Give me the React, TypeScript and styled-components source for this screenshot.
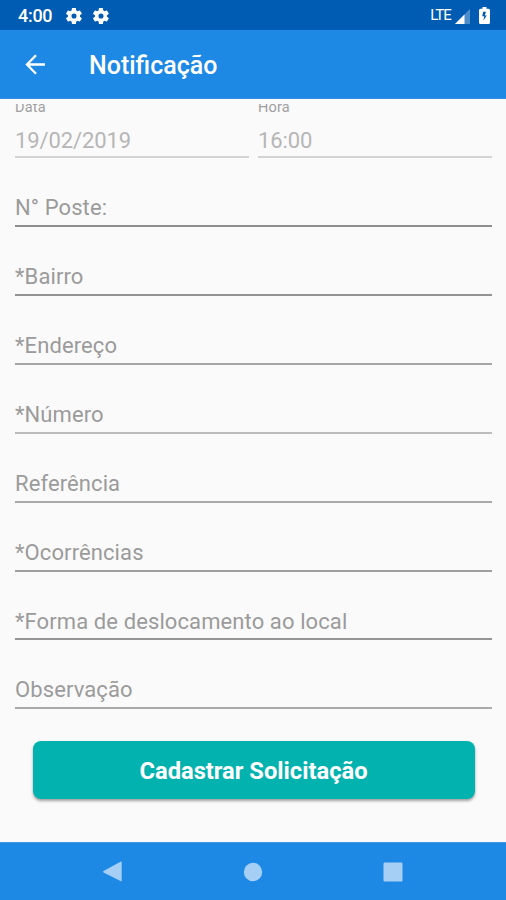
import React from 'react';
import styled, { createGlobalStyle } from 'styled-components';

const GlobalStyle = createGlobalStyle`
  * { box-sizing: border-box; }
  body { margin: 0; background: #fafafa; font-family: Roboto, "Liberation Sans", sans-serif; }
`;

const Screen = styled.div`
  width: 506px;
  height: 900px;
  display: flex;
  flex-direction: column;
  background: #fafafa;
  overflow: hidden;
`;

const StatusBar = styled.div`
  height: 30px;
  flex: none;
  display: flex;
  align-items: center;
  padding: 2px 16px 0 18px;
  background: #005cb2;
  color: #fff;
  svg { display: block; flex: none; }
`;

const Clock = styled.span`
  width: 48px;
  font-size: 18px;
  line-height: 22px;
  font-weight: 500;
  letter-spacing: -0.3px;
`;

const Gears = styled.div`
  display: flex;
  gap: 11px;
`;

const Indicators = styled.div`
  margin-left: auto;
  display: flex;
  align-items: center;
`;

const Network = styled.span`
  font-size: 15px;
  line-height: 20px;
  letter-spacing: -0.9px;
  font-weight: 400;
  margin: -2px 4px 0 0;
`;

const Battery = styled.svg`
  margin: -1px 0 0 9px;
`;

const Header = styled.header`
  height: 69px;
  flex: none;
  display: flex;
  align-items: center;
  padding-left: 22px;
  background: #1e88e5;
  border-bottom: 1px solid #3390e2;
`;

const BackButton = styled.button`
  width: 67px;
  padding: 0;
  border: 0;
  background: none;
  svg { display: block; }
`;

const Title = styled.h1`
  margin: 3px 0 0;
  color: #fff;
  font-size: 25px;
  line-height: 32px;
  font-weight: 500;
`;

const Form = styled.main`
  flex: 1;
  min-height: 0;
  margin-top: 5px;
  padding: 0 14px 0 15px;
  overflow: hidden;
`;

const DateRow = styled.div`
  height: 54.25px;
  display: grid;
  grid-template-columns: 234px 234px;
  gap: 9px;
`;

const DateField = styled.div`
  height: 54px;
  border-bottom: 2px solid #d3d3d3;
`;

const SmallLabel = styled.div`
  height: 14px;
  margin-top: -5px;
  color: #a0a0a0;
  font-size: 14.5px;
  line-height: 18px;
  letter-spacing: 0.2px;
`;

const DateValue = styled.div`
  margin-top: 14px;
  color: #b6b6b6;
  font-size: 22px;
  line-height: 28px;
  letter-spacing: -0.1px;
`;

const Field = styled.div<{ $line: string }>`
  height: 68.9px;
  padding-top: 36px;
  border-bottom: 2px solid ${(p) => p.$line};
  color: #9b9b9b;
  font-size: 22px;
  line-height: 28px;
  letter-spacing: 0.1px;
`;

const SubmitButton = styled.button`
  display: block;
  width: 442px;
  height: 58px;
  margin: 31.6px 0 0 17.5px;
  padding: 2px 0 0;
  border: 0;
  border-radius: 8px;
  background: #02b2af;
  box-shadow: 0 2px 3px rgba(0, 0, 0, 0.36);
  color: #fff;
  font-family: inherit;
  font-size: 23.7px;
  font-weight: 700;
`;

const NavBar = styled.nav`
  height: 58px;
  flex: none;
  display: flex;
  justify-content: space-between;
  align-items: center;
  padding: 0 103px 0 102px;
  background: #1e88e5;
  border-top: 1px solid #4298e5;
`;

const FIELDS = [
  { label: 'N° Poste:', line: '#8e8e8e' },
  { label: '*Bairro', line: '#929292' },
  { label: '*Endereço', line: '#a5a5a5' },
  { label: '*Número', line: '#bcbcbc' },
  { label: 'Referência', line: '#a9a9a9' },
  { label: '*Ocorrências', line: '#9f9f9f' },
  { label: '*Forma de deslocamento ao local', line: '#949494' },
  { label: 'Observação', line: '#aaaaaa' },
];

const Gear = () => (
  <svg width="16" height="16" viewBox="2 2 20 20">
    <path
      fill="#fff"
      fillRule="evenodd"
      d="M19.4 13a7.7 7.7 0 0 0 0-2l2.1-1.6a.5.5 0 0 0 .1-.7l-2-3.4a.5.5 0 0 0-.6-.2l-2.5 1a7.3 7.3 0 0 0-1.7-1l-.4-2.7a.5.5 0 0 0-.5-.4h-4a.5.5 0 0 0-.5.4L9 5.1a7.3 7.3 0 0 0-1.7 1l-2.5-1a.5.5 0 0 0-.6.2l-2 3.4a.5.5 0 0 0 .1.7L4.500 11a7.700 7.700 0 0 0 0 2l-2.200 1.600a.5.5 0 0 0-.1.700l2 3.400c.1.200.4.300.6.200l2.500-1a7.300 7.300 0 0 0 1.700 1l.4 2.700c0 .200.200.400.500.400h4c.300 0 .5-.2.500-.4l.4-2.700a7.300 7.300 0 0 0 1.700-1l2.500 1c.2.100.5 0 .6-.2l2-3.400a.5.5 0 0 0-.1-.7zM12 15.200a3.200 3.200 0 1 1 0-6.400 3.200 3.200 0 0 1 0 6.400z"
    />
  </svg>
);

export default function App() {
  return (
    <Screen>
      <GlobalStyle />
      <StatusBar>
        <Clock>4:00</Clock>
        <Gears>
          <Gear />
          <Gear />
        </Gears>
        <Indicators>
          <Network>LTE</Network>
          <svg width="15" height="15" viewBox="0 0 15 15">
            <path d="M15 0v15H0z" fill="#4c8dca" />
            <path d="M9.500 5.500V15H0z" fill="#fff" />
          </svg>
          <Battery width="11" height="17" viewBox="0 0 11 17">
            <path d="M3.500 0h4v1.800h2A1.500 1.500 0 0 1 11 3.300v12.200a1.500 1.500 0 0 1-1.500 1.500h-8A1.500 1.500 0 0 1 0 15.500V3.300a1.500 1.500 0 0 1 1.500-1.500h2z" fill="#fff" />
            <path d="M6.900 4.800H4.200L3.200 9.300h2.100L4.400 13.400 7.800 8.400H5.900z" fill="#005cb2" />
          </Battery>
        </Indicators>
      </StatusBar>
      <Header>
        <BackButton aria-label="Voltar">
          <svg width="26" height="24" viewBox="0 0 26 24" fill="none" stroke="#fff" strokeWidth="2.3">
            <path d="M23 12.500H5M14 3.300l-9 9.200 9 9.200" />
          </svg>
        </BackButton>
        <Title>Notificação</Title>
      </Header>
      <Form>
        <DateRow>
          <DateField>
            <SmallLabel>Data</SmallLabel>
            <DateValue>19/02/2019</DateValue>
          </DateField>
          <DateField>
            <SmallLabel>Hora</SmallLabel>
            <DateValue>16:00</DateValue>
          </DateField>
        </DateRow>
        {FIELDS.map((field) => (
          <Field key={field.label} $line={field.line}>
            {field.label}
          </Field>
        ))}
        <SubmitButton>Cadastrar Solicitação</SubmitButton>
      </Form>
      <NavBar>
        <svg width="21" height="22" viewBox="0 0 21 22">
          <path d="M1.500 10 18.500.700q1.200-.5 1.200.700v18q0 1.200-1.200.7L1.500 11.500q-1-.7 0-1.500z" fill="#a5cff5" />
        </svg>
        <svg width="20" height="20" viewBox="0 0 20 20">
          <circle cx="10" cy="10" r="9.200" fill="#a5cff5" />
        </svg>
        <svg width="20" height="20" viewBox="0 0 20 20">
          <rect x="0.500" y="0.500" width="19" height="19" rx="1.200" fill="#a5cff5" />
        </svg>
      </NavBar>
    </Screen>
  );
}
